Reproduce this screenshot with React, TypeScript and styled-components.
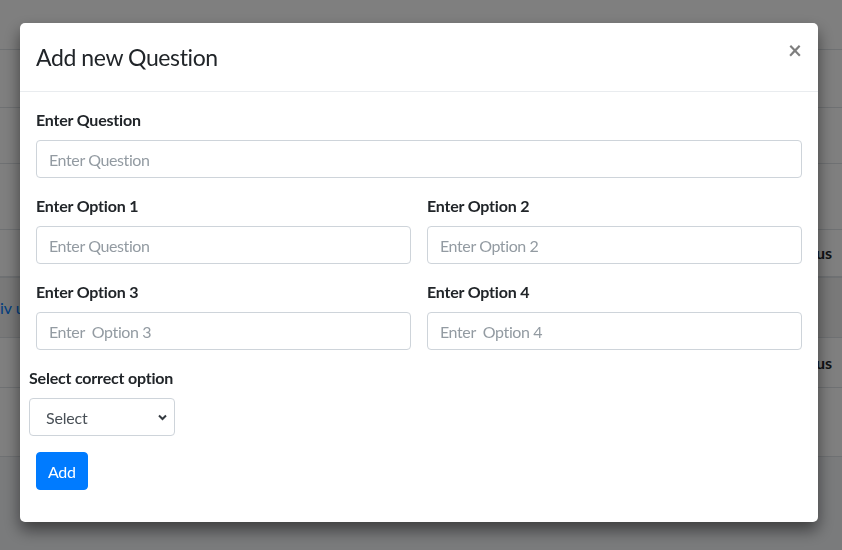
import React from "react";
import styled, { createGlobalStyle } from "styled-components";

const GlobalStyle = createGlobalStyle`
  html, body { margin: 0; padding: 0; }
  body {
    font-family: Lato, "Noto Sans", "Liberation Sans", sans-serif;
    font-size: 16px;
    line-height: 1.5;
    color: #212529;
    background: #f4f6f9;
    overflow: hidden;
  }
  * { box-sizing: border-box; }
`;

const Page = styled.div`
  width: 842px;
  height: 550px;
  background: #f4f6f9;
  overflow: hidden;
`;

const Table = styled.div`
  display: flex;
  flex-direction: column;
  background: #fff;
`;

const Row = styled.div<{ $h: number; $striped?: boolean; $thick?: boolean }>`
  height: ${(p) => p.$h}px;
  display: flex;
  align-items: center;
  justify-content: space-between;
  padding: 0 10px 0 0;
  border-bottom: ${(p) => (p.$thick ? 2 : 1)}px solid #dee2e6;
  background: ${(p) => (p.$striped ? "rgba(0,0,0,0.05)" : "#fff")};
`;

const CellLink = styled.span`
  color: #007bff;
  font-size: 16px;
  white-space: nowrap;
`;

const CellHead = styled.span`
  font-weight: 700;
  font-size: 16px;
  margin-left: auto;
`;

const Overlay = styled.div`
  position: fixed;
  inset: 0;
  background: rgba(0, 0, 0, 0.5);
  display: flex;
  justify-content: center;
  align-items: flex-start;
  padding: 23px 4px 0 0;
`;

const Modal = styled.div`
  width: 798px;
  background: #fff;
  border-radius: 5px;
  box-shadow: 0 8px 16px rgba(0, 0, 0, 0.5);
  display: flex;
  flex-direction: column;
`;

const Header = styled.div`
  display: flex;
  align-items: flex-start;
  justify-content: space-between;
  padding: 16px;
  border-bottom: 1px solid #e9ecef;
  height: 69px;
`;

const Title = styled.h4`
  margin: 0;
  font-size: 23px;
  font-weight: 400;
  letter-spacing: -0.4px;
  line-height: 36px;
  color: #212529;
`;

const Close = styled.button`
  border: 0;
  background: transparent;
  font-family: inherit;
  font-size: 24px;
  font-weight: 700;
  line-height: 1;
  color: #000;
  opacity: 0.5;
  text-shadow: 0 1px 0 #fff;
  padding: 0;
  margin: -1px 0 0 0;
  cursor: pointer;
`;

const Body = styled.div`
  padding: 16px 16px 16px;
  display: flex;
  flex-direction: column;
`;

const Grid = styled.div`
  display: grid;
  grid-template-columns: 1fr 1fr;
  column-gap: 16px;
`;

const Group = styled.div<{ $shift?: number }>`
  display: flex;
  flex-direction: column;
  margin-bottom: 16px;
  margin-left: ${(p) => p.$shift ?? 0}px;
  align-items: flex-start;
`;

const Label = styled.label`
  font-weight: 700;
  font-size: 16px;
  letter-spacing: -0.2px;
  line-height: 24px;
  margin-bottom: 8px;
  color: #212529;
`;

const Input = styled.input`
  width: 100%;
  height: 38px;
  padding: 6px 12px;
  font-family: inherit;
  font-size: 16px;
  letter-spacing: -0.4px;
  color: #495057;
  background: #fff;
  border: 1px solid #ced4da;
  border-radius: 4px;
  outline: none;
  &::placeholder {
    color: #939ba2;
    opacity: 1;
  }
`;

const SelectWrap = styled.div`
  position: relative;
  width: 146px;
  height: 38px;
`;

const Select = styled.select`
  appearance: none;
  -webkit-appearance: none;
  width: 100%;
  height: 38px;
  padding: 6px 28px 6px 16px;
  font-family: inherit;
  font-size: 16px;
  letter-spacing: -0.2px;
  color: #495057;
  background: #fff;
  border: 1px solid #ced4da;
  border-radius: 4px;
  outline: none;
`;

const Chevron = styled.svg`
  position: absolute;
  right: 8px;
  top: 16px;
  pointer-events: none;
`;

const Button = styled.button`
  height: 38px;
  padding: 6px 11px;
  font-family: inherit;
  font-size: 16px;
  letter-spacing: -0.3px;
  color: #fff;
  background: #007bff;
  border: 1px solid #007bff;
  border-radius: 4px;
  cursor: pointer;
`;

export default function App() {
  return (
    <>
      <GlobalStyle />
      <Page>
        <Table>
          <Row $h={50} />
          <Row $h={58} />
          <Row $h={56} />
          <Row $h={66} />
          <Row $h={48} $thick>
            <CellHead>Status</CellHead>
          </Row>
          <Row $h={60} $striped>
            <CellLink>iv ul li item</CellLink>
          </Row>
          <Row $h={50}>
            <CellHead>Status</CellHead>
          </Row>
          <Row $h={69} />
        </Table>
      </Page>
      <Overlay>
        <Modal>
          <Header>
            <Title>Add new Question</Title>
            <Close aria-label="Close">×</Close>
          </Header>
          <Body>
            <Group>
              <Label>Enter Question</Label>
              <Input placeholder="Enter Question" />
            </Group>
            <Grid>
              <Group>
                <Label>Enter Option 1</Label>
                <Input placeholder="Enter Question" />
              </Group>
              <Group>
                <Label>Enter Option 2</Label>
                <Input placeholder="Enter Option 2" />
              </Group>
              <Group>
                <Label>Enter Option 3</Label>
                <Input placeholder="Enter  Option 3" />
              </Group>
              <Group>
                <Label>Enter Option 4</Label>
                <Input placeholder="Enter  Option 4" />
              </Group>
            </Grid>
            <Group $shift={-7}>
              <Label>Select correct option</Label>
              <SelectWrap>
                <Select defaultValue="">
                  <option value="">Select</option>
                  <option value="1">Option 1</option>
                  <option value="2">Option 2</option>
                  <option value="3">Option 3</option>
                  <option value="4">Option 4</option>
                </Select>
                <Chevron width="9" height="7" viewBox="0 0 9 7">
                  <path d="M1 1.5 L4.5 5 L8 1.5" fill="none" stroke="#343a40" strokeWidth="2" />
                </Chevron>
              </SelectWrap>
            </Group>
            <Group>
              <Button>Add</Button>
            </Group>
          </Body>
        </Modal>
      </Overlay>
    </>
  );
}
